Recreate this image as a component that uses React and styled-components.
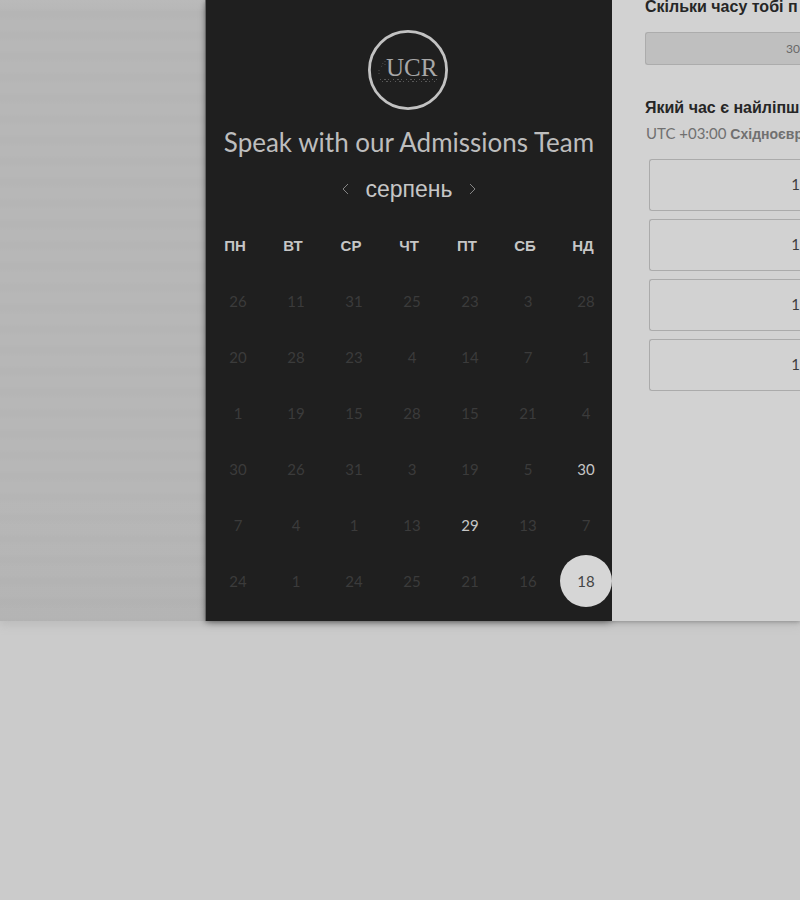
import React from "react";
import styled, { createGlobalStyle } from "styled-components";

const Global = createGlobalStyle`
  * { box-sizing: border-box; }
  body { margin: 0; background: #cbcbcb; font-family: "Liberation Sans", Arial, sans-serif; overflow-x: hidden; }
`;
const Page = styled.main`
  display: flex;
  min-height: 100vh;
  align-items: flex-start;
  overflow: hidden;
`;
const Stage = styled.div`
  display: flex;
  width: 100%;
  background: linear-gradient(#bababa 0, #b7b7b7 12px, #b7b7b7 80%, #b4b4b4 100%);
  box-shadow: 0 2px 10px 1px #b9b9b9;
`;
const Gutter = styled.div`
  flex: 0 0 205px;
  background: repeating-linear-gradient(transparent 0 8px, rgba(0, 0, 0, 0.01) 12px 16px, transparent 21px);
`;
const Card = styled.div`
  display: flex;
  flex: 1;
  min-width: 0;
  box-shadow: 0 1px 4px rgba(0, 0, 0, 0.25);
`;
const Calendar = styled.section`
  flex: 0 0 407px;
  display: flex;
  flex-direction: column;
  align-items: center;
  padding: 30px 0 12px;
  background: #1f1f1f;
  border-left: 1px solid #666;
  box-shadow: 0 3px 8px -2px rgba(0, 0, 0, 0.4);
  color: #c6c6c6;
`;
const Logo = styled.svg`
  display: block;
  width: 82px;
  height: 82px;
`;
const Title = styled.h1`
  margin: 13px 0 0;
  font: 400 26px/34px Lato, sans-serif;
  white-space: nowrap;
  color: #bdbdbd;
`;
const MonthBar = styled.div`
  display: flex;
  align-items: center;
  gap: 12px;
  margin-top: 13px;
`;
const Month = styled.h2`
  margin: 0;
  font-size: 23px;
  line-height: 34px;
  font-weight: 400;
`;
const Arrow = styled.button`
  display: flex;
  padding: 0;
  border: 0;
  background: none;
  color: #858585;
`;
const Days = styled.table`
  width: 100%;
  table-layout: fixed;
  border-collapse: collapse;
  margin-top: 11px;
`;
const Weekday = styled.th`
  height: 56px;
  padding: 0;
  font-size: 15px;
  font-weight: 700;
  text-align: center;
`;
const DayCell = styled.td`
  height: 56px;
  padding: 0;
`;
const Day = styled.button`
  display: block;
  width: 52px;
  height: 52px;
  margin: 0 0 0 auto;
  padding: 0;
  border: 0;
  border-radius: 50%;
  font: 400 15px/52px Lato, sans-serif;
  background: ${(p) => (p.$kind === "selected" ? "#d6d6d6" : "transparent")};
  color: ${(p) => ({ selected: "#444", open: "#c6c6c6" })[p.$kind] || "#3b3b3b"};
`;
const Details = styled.section`
  flex: 1;
  min-width: 0;
  padding: 0 0 0 33px;
  background: #d2d2d2;
  overflow: hidden;
  white-space: nowrap;
`;
const Question = styled.h3`
  margin: ${(p) => p.$top}px 0 0;
  font-size: 16px;
  line-height: 20px;
  font-weight: 700;
  color: #262626;
`;
const Duration = styled.button`
  display: block;
  width: 100%;
  height: 33px;
  margin-top: 15px;
  padding: 0;
  border: 1px solid #acacac;
  border-right: 0;
  border-radius: 3px 0 0 3px;
  background: #bfbfbf;
  color: #686868;
  font: 400 12px/30px Lato, sans-serif;
  text-align: right;
`;
const Zone = styled.p`
  margin: 4px 0 0 1px;
  font: 400 15px/22px Lato, sans-serif;
  color: #707070;
`;
const ZoneName = styled.strong`
  font: 700 14px/22px "Liberation Sans", sans-serif;
`;
const Slots = styled.div`
  display: grid;
  gap: 8px;
  margin: 14px 0 0 4px;
`;
const Slot = styled.button`
  height: 52px;
  padding: 0 0 2px;
  border: 1px solid #ababab;
  border-right: 0;
  border-radius: 3px 0 0 3px;
  background: transparent;
  color: #3c3c3c;
  font: 400 15px/48px Lato, sans-serif;
  text-align: right;
`;

const weekdays = ["ПН", "ВТ", "СР", "ЧТ", "ПТ", "СБ", "НД"];
const weeks = [
  [26, 11, 31, 25, 23, 3, 28],
  [20, 28, 23, 4, 14, 7, 1],
  [1, 19, 15, 28, 15, 21, 4],
  [30, 26, 31, 3, 19, 5, 30],
  [7, 4, 1, 13, 29, 13, 7],
  [24, 1, 24, 25, 21, 16, 18],
];
const kindOf = (row, col) => {
  if (row === 5 && col === 6) return "selected";
  if ((row === 3 && col === 6) || (row === 4 && col === 4)) return "open";
  return "closed";
};

function Chevron({ d }) {
  return (
    <svg width="14" height="14" viewBox="0 0 14 14" fill="none" stroke="currentColor" aria-hidden="true">
      <path d={d} />
    </svg>
  );
}

export default function App() {
  return (
    <Page>
      <Global />
      <Stage>
        <Gutter />
        <Card>
          <Calendar>
            <Logo viewBox="0 0 82 82" role="img" aria-label="UCR">
              <circle cx="40" cy="40" r="38.6" fill="none" stroke="#c2c2c2" strokeWidth="2.8" />
              <text x="18" y="46" fontFamily="Liberation Serif, serif" fontSize="25" fill="#a8a8a8">UCR</text>
              <path d="M12 49.5H69M14 51.5H67" stroke="#585858" strokeWidth="1" strokeDasharray="1 3 2 2 1 4" />
              <path d="M15 33l-2 5M11 40v5M17 31v6" stroke="#505050" strokeDasharray="1 2" />
            </Logo>
            <Title>Speak with our Admissions Team</Title>
            <MonthBar>
              <Arrow aria-label="Попередній місяць"><Chevron d="M9 2L4 7l5 5" /></Arrow>
              <Month>серпень</Month>
              <Arrow aria-label="Наступний місяць"><Chevron d="M5 2l5 5-5 5" /></Arrow>
            </MonthBar>
            <Days>
              <thead>
                <tr>{weekdays.map((d) => <Weekday key={d} scope="col">{d}</Weekday>)}</tr>
              </thead>
              <tbody>
                {weeks.map((week, r) => (
                  <tr key={r}>
                    {week.map((day, c) => (
                      <DayCell key={c}><Day $kind={kindOf(r, c)} disabled={kindOf(r, c) === "closed"}>{day}</Day></DayCell>
                    ))}
                  </tr>
                ))}
              </tbody>
            </Days>
          </Calendar>
          <Details>
            <Question $top={-3}>Скільки часу тобі п</Question>
            <Duration>30</Duration>
            <Question $top={33}>Який час є найліпш</Question>
            <Zone>UTC +03:00 <ZoneName>Східноєвр</ZoneName></Zone>
            <Slots>
              {[0, 1, 2, 3].map((i) => <Slot key={i}>1</Slot>)}
            </Slots>
          </Details>
        </Card>
      </Stage>
    </Page>
  );
}
